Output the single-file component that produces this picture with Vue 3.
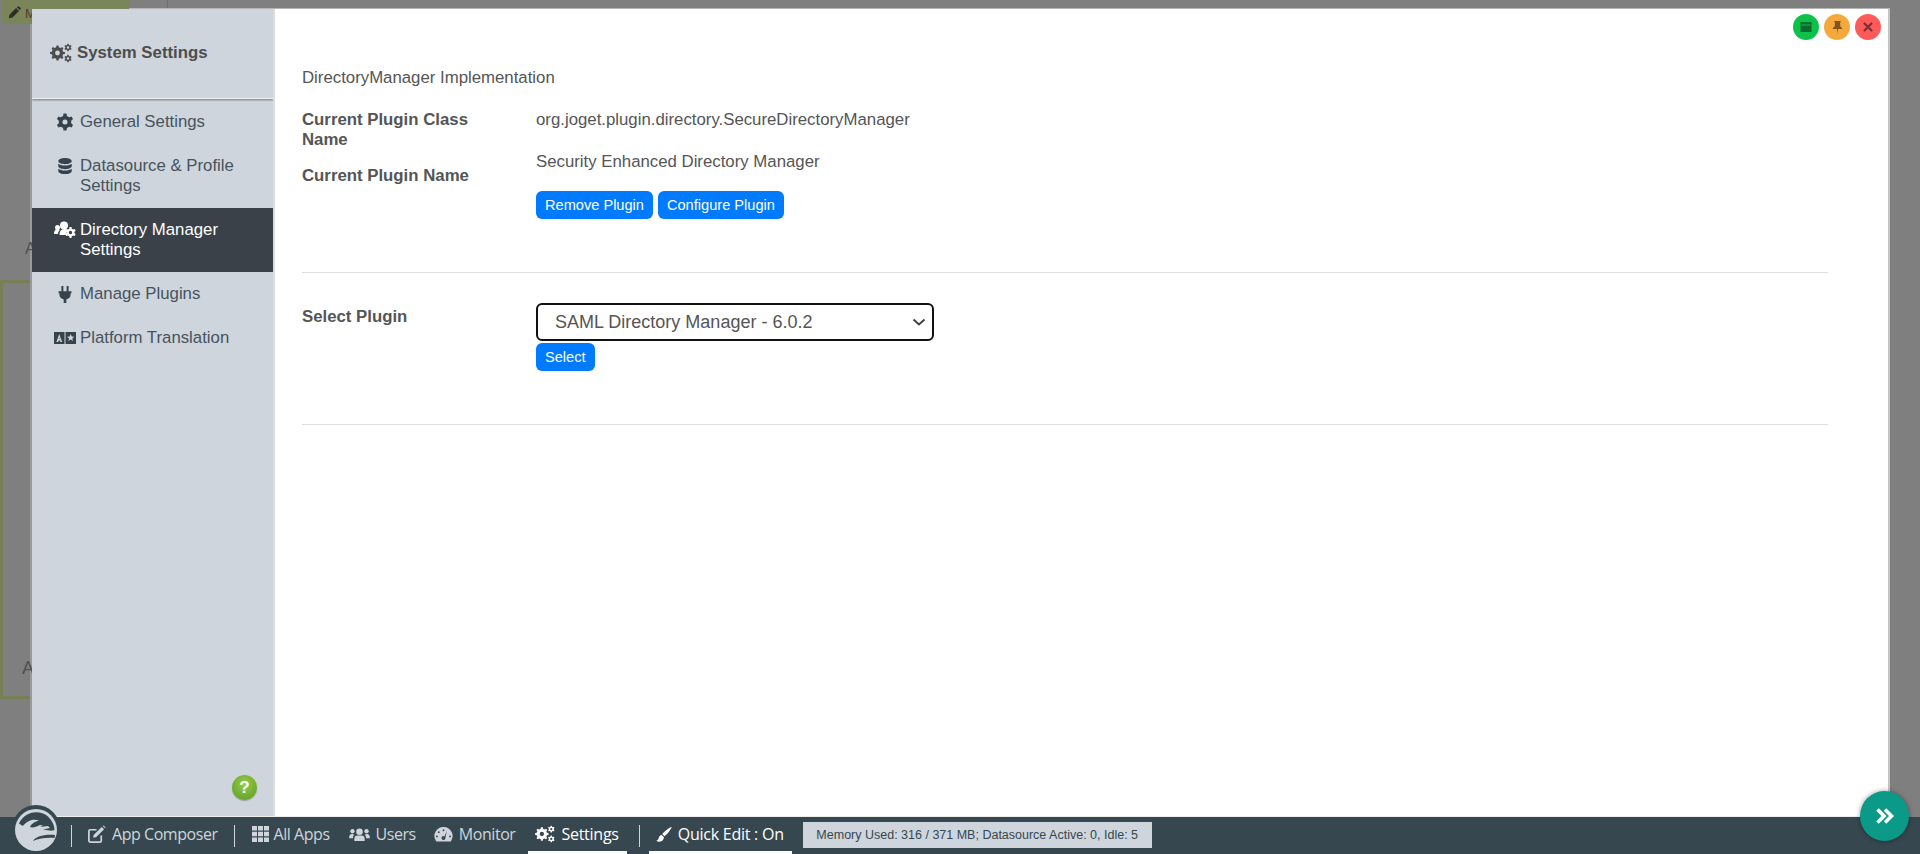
<template>
  <div class="page">
    <div class="stage">
      <!-- page behind the dimmed overlay -->
      <div class="behind-chip">
        <svg viewBox="0 0 16 16" width="13" height="13"><path d="M1 15l1-4.500 8-8 3.500 3.500-8 8zM11 1.500l1-1q1-.5 1.500 0l2 2q.5.5 0 1.500l-1 1z" fill="#2b2f24"/></svg>
        <span>M</span>
      </div>
      <div class="behind-line"></div>
      <div class="behind-letter first">A</div>
      <div class="behind-box"><span>A</span></div>

      <div class="modal">
        <aside class="sidebar">
          <div class="side-head">
            <svg class="head-icon" viewBox="0 0 22 20" width="22" height="20"><path :d="bigGear" fill-rule="evenodd"/><path :d="smallGearTop" fill-rule="evenodd"/><path :d="smallGearBottom" fill-rule="evenodd"/></svg>
            <span>System Settings</span>
          </div>
          <ul class="menu">
            <li class="item">
              <svg class="mi" viewBox="0 0 20 20"><path :d="cog" fill-rule="evenodd"/></svg>
              <span>General Settings</span>
            </li>
            <li class="item">
              <svg class="mi" viewBox="0 0 20 20"><path d="M2.500 4.500C2.500 2.500 6 1 10 1s7.500 1.500 7.500 3.500S14 8 10 8 2.500 6.500 2.500 4.500zM2.500 7.500C4 8.800 7 9.500 10 9.500s6-.7 7.500-2V10c0 2-3.500 3.500-7.500 3.500S2.500 12 2.500 10zM2.500 13c1.500 1.300 4.500 2 7.500 2s6-.7 7.500-2v2.500c0 2-3.500 3.500-7.500 3.500s-7.500-1.500-7.500-3.500z"/></svg>
              <span>Datasource &amp; Profile<br>Settings</span>
            </li>
            <li class="item active">
              <svg class="mi wide" viewBox="0 0 22 18"><circle cx="10" cy="4.500" r="4"/><circle cx="3.500" cy="6.500" r="2.500"/><path d="M0 13c0-3 1-4.800 3.500-4.800 1 0 1.800.3 2.300.8C4.500 10.200 4 11.500 4 13zM5.500 14c0-4 1.500-6 4.500-6 1.500 0 2.500.4 3.300 1.200-1 1.500-1 3.300 0 4.800z"/><path :d="userGear" fill-rule="evenodd"/></svg>
              <span>Directory Manager<br>Settings</span>
            </li>
            <li class="item">
              <svg class="mi" viewBox="0 0 20 20"><path d="M6 1h2.200v6H6zM11.800 1H14v6h-2.200zM2.800 7h14.400v2.200h-1v1.500c0 2.800-2 4.700-4.700 5.200V20H8.500v-4.100c-2.700-.5-4.700-2.400-4.700-5.200V9.200h-1z"/></svg>
              <span>Manage Plugins</span>
            </li>
            <li class="item">
              <svg class="mi wide" viewBox="0 0 22 18"><path fill-rule="evenodd" d="M0 3h10.500v12H0zM5.200 5L2.400 13h1.800l.4-1.400h1.300l.4 1.400h1.800zM5.200 8.200l.4 1.800h-.8zM11.500 3H22v12H11.500zM16.700 5l-1 2.500-2.600.2 2 1.700-.7 2.600 2.300-1.400 2.300 1.400-.7-2.600 2-1.700-2.600-.2z"/></svg>
              <span>Platform Translation</span>
            </li>
          </ul>
          <div class="help">?</div>
        </aside>

        <main class="content">
          <div class="win-buttons">
            <button class="win green">
              <svg viewBox="0 0 14 14" width="14" height="14"><path d="M1.500 2h11v10h-11z" fill="#0b6b2c"/><path d="M2.500 4.500h9v1h-9z" fill="#0dc24a"/></svg>
            </button>
            <button class="win orange">
              <svg viewBox="0 0 14 14" width="15" height="15"><path d="M4 1h6v1.200L9.300 2.600l.5 3.600c1 .5 1.700 1.400 1.700 2.300h-4L7 13l-.5-4.500h-4c0-.9.700-1.800 1.700-2.300l.5-3.600L4 2.200z" fill="#80561a"/></svg>
            </button>
            <button class="win red">
              <svg viewBox="0 0 14 14" width="14" height="14"><path d="M3.500 3.500l7 7M10.500 3.500l-7 7" stroke="#7c2f36" stroke-width="2.200" stroke-linecap="round"/></svg>
            </button>
          </div>

          <div class="impl-title">DirectoryManager Implementation</div>

          <section class="block current">
            <div class="labels">
              <div class="lbl">Current Plugin Class Name</div>
              <div class="lbl second">Current Plugin Name</div>
            </div>
            <div class="values">
              <div class="val">org.joget.plugin.directory.SecureDirectoryManager</div>
              <div class="val name">Security Enhanced Directory Manager</div>
              <div class="btn-row">
                <button class="btn">Remove Plugin</button>
                <button class="btn">Configure Plugin</button>
              </div>
            </div>
          </section>

          <section class="block picker">
            <div class="labels"><div class="lbl">Select Plugin</div></div>
            <div class="values">
              <div class="select-wrap">
                <select class="plugin-select">
                  <option>SAML Directory Manager - 6.0.2</option>
                </select>
                <svg class="chevron" viewBox="0 0 14 8" width="14" height="8"><path d="M1.500 1.500L7 6.500l5.500-5" fill="none" stroke="#444" stroke-width="2"/></svg>
              </div>
              <div><button class="btn">Select</button></div>
            </div>
          </section>
        </main>
      </div>
    </div>

    <nav class="bar">
      <div class="logo">
        <svg viewBox="0 0 48 48" width="48" height="48">
          <circle cx="24" cy="24" r="24" fill="#37474f"/>
          <circle cx="24" cy="25" r="21" fill="#ced5dc"/>
          <path d="M7 18.500A18.500 18.500 0 0 1 42.500 25L24 30z" fill="#37474f"/>
          <path d="M5 25C10 22 13 18 17 16c3-1.500 7-1.500 10-.5-4 1-8 3.500-9 6.500 3 1 6 0 10-2l3 .500-3 1.500 8-1 2 2-7 1.500 10 1.500 2 1v3H5z" fill="#ced5dc"/>
          <path d="M21 36c3-5 12-7 22-6l-.5 3c-7-.5-15 0-21.500 3z" fill="#37474f"/>
        </svg>
      </div>
      <span class="sep first-sep"></span>
      <a class="nav-link composer">
        <svg class="ni" viewBox="0 0 20 20" width="19" height="19"><path d="M15 11v5.500a1.500 1.500 0 0 1-1.500 1.500h-10A1.500 1.500 0 0 1 2 16.500v-10A1.500 1.500 0 0 1 3.500 5H10" fill="none" stroke="currentColor" stroke-width="1.800"/><path d="M7 10.500L15.500 2 18 4.500 9.500 13 6.500 13.500zM16.500 1l1-.5 2 2-.5 1z"/></svg>
        App Composer
      </a>
      <span class="sep"></span>
      <a class="nav-link apps">
        <svg class="ni" viewBox="0 0 17 16" width="17" height="16"><path d="M0 0h5v4.500H0zM6 0h5v4.500H6zM12 0h5v4.500h-5zM0 5.700h5v4.500H0zM6 5.700h5v4.500H6zM12 5.700h5v4.500h-5zM0 11.500h5V16H0zM6 11.500h5V16H6zM12 11.500h5V16h-5z"/></svg>
        All Apps
      </a>
      <a class="nav-link users">
        <svg class="ni" viewBox="0 0 22 16" width="21" height="15"><circle cx="11" cy="5" r="3.500"/><circle cx="3.500" cy="4.500" r="2.300"/><circle cx="18.500" cy="4.500" r="2.300"/><path d="M5.500 15v-2.500C5.500 10 7 9 8.500 9h5c1.500 0 3 1 3 3.500V15zM0 11c0-2 1-3.500 3-3.500 1 0 1.800.3 2.300.8C4.300 9.300 4 10.500 4 12H0zM22 11c0-2-1-3.500-3-3.500-1 0-1.800.3-2.300.8 1 1 1.300 2.200 1.300 3.700h4z"/></svg>
        Users
      </a>
      <a class="nav-link monitor">
        <svg class="ni" viewBox="0 0 20 18" width="19" height="17"><path fill-rule="evenodd" d="M10 1a9.500 9.500 0 0 1 8 14.800q-.5.700-1.300.7H3.300q-.8 0-1.300-.7A9.500 9.500 0 0 1 10 1zM10 3.500a1 1 0 1 0 0 2 1 1 0 0 0 0-2zM5 5.500a1 1 0 1 0 0 2 1 1 0 0 0 0-2zM3 10a1 1 0 1 0 0 2 1 1 0 0 0 0-2zM17 10a1 1 0 1 0 0 2 1 1 0 0 0 0-2zM13.500 5l-2.500 6a2 2 0 1 0-2 3.500A2 2 0 0 0 12 12.500z"/></svg>
        Monitor
      </a>
      <a class="nav-link settings current-link">
        <svg class="ni" viewBox="0 0 22 20" width="20" height="18"><path :d="bigGear" fill-rule="evenodd"/><path :d="smallGearTop" fill-rule="evenodd"/><path :d="smallGearBottom" fill-rule="evenodd"/></svg>
        Settings
      </a>
      <span class="sep settings-sep"></span>
      <a class="nav-link quick current-link">
        <svg class="ni" viewBox="0 0 18 18" width="16" height="17"><path d="M17.500.5c.5.500-3.500 7-8 10.500L7 8.500C10.500 4 17 0 17.500.5zM6.300 9.500l2.700 2.700c-.2 3-2.500 5-5 5-1.500 0-3-.5-3.500-1.500 1.500 0 2-1 2.500-2.500.5-2 1.500-3.500 3.300-3.700z"/></svg>
        Quick Edit : On
      </a>
      <div class="memory">Memory Used: 316 / 371 MB; Datasource Active: 0, Idle: 5</div>
    </nav>

    <button class="fab">
      <svg viewBox="0 0 24 24" width="24" height="24"><path d="M4.500 5.500L11 12l-6.500 6.500M12 5.500l6.500 6.500L12 18.500" fill="none" stroke="#fff" stroke-width="3.600"/></svg>
    </button>
  </div>
</template>

<script setup>
// builds a toothed gear outline with a round hole in the middle
const gear = (cx, cy, outer, inner, hole, teeth) => {
  let d = ''
  const step = (Math.PI * 2) / teeth
  for (let i = 0; i < teeth; i++) {
    const a = i * step - Math.PI / 2
    const pts = [
      [outer, a - step * 0.17],
      [outer, a + step * 0.17],
      [inner, a + step * 0.3],
      [inner, a + step * 0.7],
    ]
    pts.forEach(([r, t], j) => {
      const x = (cx + r * Math.cos(t)).toFixed(2)
      const y = (cy + r * Math.sin(t)).toFixed(2)
      d += (i === 0 && j === 0 ? 'M' : 'L') + x + ' ' + y
    })
  }
  d += 'Z'
  d += `M${cx - hole} ${cy}a${hole} ${hole} 0 1 0 ${hole * 2} 0a${hole} ${hole} 0 1 0 ${-hole * 2} 0Z`
  return d
}

const bigGear = gear(7.5, 10, 7.5, 5.8, 2.4, 8)
const smallGearTop = gear(18, 4.5, 3.8, 2.8, 1.2, 6)
const smallGearBottom = gear(18, 15.5, 3.8, 2.8, 1.2, 6)
const cog = gear(10, 10, 9.5, 7, 2.8, 6)
const userGear = gear(16.5, 11.5, 5.5, 4, 1.7, 6)
</script>

<style>
html,
body {
  margin: 0;
  padding: 0;
  overflow: hidden;
}
</style>

<style scoped>
.page {
  position: relative;
  width: 1920px;
  height: 854px;
  display: flex;
  flex-direction: column;
  overflow: hidden;
  background: #7f7f7f;
  font-family: "Liberation Sans", Arial, sans-serif;
  color: #555;
}
.stage {
  position: relative;
  flex: 1;
  min-height: 0;
  display: flex;
  padding: 8px 30px 0 30px;
}
.behind-chip {
  position: absolute;
  left: 1px;
  top: 0;
  width: 128px;
  height: 24px;
  box-sizing: border-box;
  padding: 6px 0 0 7px;
  display: flex;
  gap: 4px;
  font-size: 13px;
  color: #5a3a30;
  background: #7a8659;
  border-radius: 0 0 6px 6px;
}
.behind-line {
  position: absolute;
  left: 167px;
  top: 0;
  width: 1px;
  height: 8px;
  background: #6e6e6e;
}
.behind-letter {
  position: absolute;
  left: 25px;
  top: 240px;
  font-size: 16px;
  color: #4f5055;
}
.behind-box {
  position: absolute;
  left: 0;
  top: 280px;
  width: 30px;
  height: 419px;
  box-sizing: border-box;
  border: 3px solid #767f55;
  border-right: none;
}
.behind-box span {
  position: absolute;
  left: 19px;
  top: 375px;
  font-size: 18px;
  color: #4f5055;
}
.modal {
  flex: 1;
  min-width: 0;
  display: flex;
  background: #fff;
  border-top: 1px solid #b5b5b5;
  border-left: 2px solid #9a9a9a;
  border-right: 2px solid #c4c4c4;
  border-bottom: 1px solid #eee;
  box-sizing: border-box;
}
.sidebar {
  position: relative;
  width: 241px;
  flex: none;
  overflow: hidden;
  background: #ced5dc;
  border-right: 2px solid #dcdcdc;
  color: #47525a;
}
.side-head {
  height: 90px;
  box-sizing: border-box;
  padding: 0 0 2px 18px;
  display: flex;
  align-items: center;
  gap: 5px;
  font-size: 16.8px;
  font-weight: 700;
  color: #4d4d4d;
  border-bottom: 1px solid #eef0f2;
  box-shadow: 0 1px 2px rgba(0, 0, 0, 0.45);
}
.head-icon {
  fill: #4d4d4d;
}
.menu {
  list-style: none;
  margin: 0;
  padding: 1px 0 0;
}
.item {
  display: flex;
  padding: 12px 10px 12px 0;
  font-size: 16.8px;
  line-height: 20px;
  color: #47535c;
}
.mi {
  width: 18px;
  height: 18px;
  flex: none;
  margin: 1px 6px 0 24px;
  fill: #37434c;
}
.mi.wide {
  width: 22px;
  margin: 1px 4px 0 22px;
}
.active {
  background: #3a4149;
  color: #fff;
}
.active .mi {
  fill: #fff;
}
.help {
  position: absolute;
  right: 16px;
  bottom: 16px;
  width: 25px;
  height: 25px;
  border-radius: 50%;
  background: radial-gradient(circle at 50% 35%, #95cc4c, #5a9a1e);
  box-shadow: 0 1px 1px rgba(0, 0, 0, 0.25);
  color: #fff;
  font-size: 17px;
  font-weight: 700;
  line-height: 25px;
  text-align: center;
}
.content {
  position: relative;
  flex: 1;
  min-width: 0;
  padding: 59px 60px 0 27px;
  font-size: 16.8px;
  line-height: 20px;
}
.win-buttons {
  position: absolute;
  top: 5px;
  right: 7px;
  display: flex;
  gap: 5px;
}
.win {
  width: 26px;
  height: 26px;
  padding: 0;
  border: none;
  border-radius: 50%;
  display: flex;
  align-items: center;
  justify-content: center;
}
.green {
  background: #0dc24a;
}
.orange {
  background: #f5a93c;
}
.red {
  background: #ff5a5a;
}
.impl-title {
  margin-bottom: 22px;
}
.block {
  display: flex;
  border-bottom: 1px solid #dedede;
}
.current {
  height: 163px;
  box-sizing: border-box;
}
.picker {
  height: 152px;
  box-sizing: border-box;
  padding-top: 34px;
}
.labels {
  width: 234px;
  flex: none;
}
.lbl {
  font-weight: 700;
  width: 190px;
}
.lbl.second {
  margin-top: 16px;
}
.val.name {
  margin-top: 22px;
}
.btn-row {
  display: flex;
  gap: 5px;
  margin-top: 19px;
}
.btn {
  height: 28px;
  padding: 0 9px;
  border: none;
  border-radius: 6px;
  background: #007bff;
  color: #fff;
  font-family: "Liberation Sans", Arial, sans-serif;
  font-size: 14.6px;
}
.select-wrap {
  position: relative;
  width: 398px;
  margin: -4px 0 2px;
}
.plugin-select {
  display: block;
  width: 100%;
  height: 38px;
  padding: 0 17px;
  box-sizing: border-box;
  appearance: none;
  border: 2px solid #111;
  border-radius: 6px;
  background: #fff;
  color: #555;
  font-family: "Liberation Sans", Arial, sans-serif;
  font-size: 18px;
}
.chevron {
  position: absolute;
  right: 8px;
  top: 15px;
  pointer-events: none;
}
.bar {
  position: relative;
  height: 37px;
  flex: none;
  display: flex;
  align-items: stretch;
  background: #37474f;
  font-family: "Open Sans", sans-serif;
  font-size: 16px;
  letter-spacing: -0.45px;
  color: #ced5dc;
}
.logo {
  position: absolute;
  left: 12px;
  top: -12px;
  width: 48px;
  height: 48px;
}
.sep {
  width: 1px;
  height: 22px;
  margin-top: 8px;
  background: #ced5dc;
  flex: none;
}
.first-sep {
  margin-left: 71px;
}
.nav-link {
  display: flex;
  align-items: center;
  gap: 6px;
  flex: none;
  box-sizing: border-box;
  padding-bottom: 3px;
}
.ni {
  fill: currentColor;
  flex: none;
}
.composer {
  margin: 0 16px 0 15px;
}
.apps {
  margin-left: 17px;
  gap: 5px;
}
.users {
  margin-left: 19px;
}
.monitor {
  margin-left: 18px;
}
.settings {
  margin-left: 13px;
  padding-left: 7px;
  padding-right: 8px;
  letter-spacing: -0.25px;
}
.settings-sep {
  margin-left: 12px;
}
.quick {
  margin-left: 9px;
  padding-left: 7px;
  padding-right: 8px;
  letter-spacing: -0.25px;
}
.current-link {
  color: #fff;
  border-bottom: 3px solid #fff;
  padding-bottom: 0;
}
.memory {
  margin: 5px 0 0 11px;
  width: 349px;
  height: 26px;
  background: #ced5dc;
  color: #37474f;
  font-family: "Liberation Sans", Arial, sans-serif;
  font-size: 12.5px;
  line-height: 26px;
  letter-spacing: 0;
  text-align: center;
}
.fab {
  position: absolute;
  left: 1860px;
  top: 791px;
  width: 49px;
  height: 50px;
  padding: 0;
  border: none;
  border-radius: 50%;
  background: #0a9a87;
  box-shadow: 0 0 5px rgba(0, 0, 0, 0.4);
  display: flex;
  align-items: center;
  justify-content: center;
}
</style>
